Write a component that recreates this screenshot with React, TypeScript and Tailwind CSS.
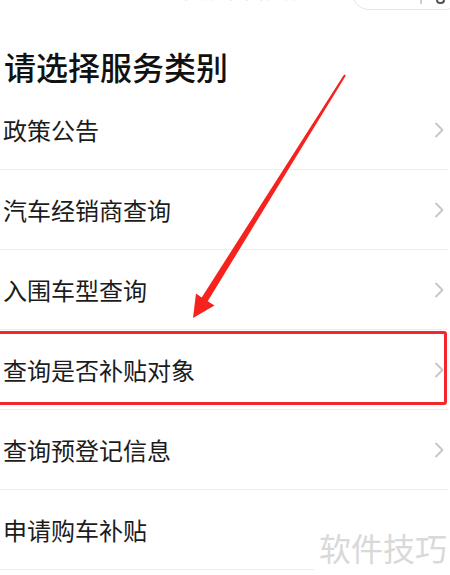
import React from "react";

const items = [
  { label: "政策公告", chevron: true },
  { label: "汽车经销商查询", chevron: true },
  { label: "入围车型查询", chevron: true },
  { label: "查询是否补贴对象", chevron: true, boxed: true },
  { label: "查询预登记信息", chevron: true },
  { label: "申请购车补贴", chevron: false },
];

function Chevron() {
  return (
    <svg width="10" height="16" viewBox="0 0 10 16" className="shrink-0">
      <polyline points="2,1.5 8.5,8 2,14.5" fill="none" stroke="#c6c6c6" strokeWidth="1.8" strokeLinecap="round" strokeLinejoin="round" />
    </svg>
  );
}

export default function App() {
  return (
    <div
      className="relative w-[450px] h-[575px] overflow-hidden bg-white"
      style={{ fontFamily: '"Noto Sans CJK SC", "Noto Sans", sans-serif' }}
    >
      {/* top bar remnants */}
      <div className="relative h-[12px] overflow-hidden">
        <div className="absolute left-[176px] top-[-21px] text-[20px] leading-[24px] text-[#e4e4e4]">
          申请购车补贴
        </div>
        <div className="absolute right-[-12px] top-[-24px] w-[110px] h-[34px] rounded-full border border-[#e6e6e6] bg-white flex items-end justify-end gap-[14px] pr-[16px] pb-[5px]">
          <span className="block w-[2px] h-[5px] bg-[#cfcfcf]" />
          <span className="block w-[9px] h-[4px] rounded-b-full border-2 border-t-0 border-[#555]" />
        </div>
      </div>

      {/* title */}
      <div className="mt-[34px] mb-[4px] h-[40px] flex items-center pl-[4px] text-[32px] leading-[40px] font-medium text-[#111]">
        请选择服务类别
      </div>

      {/* list */}
      <div className="flex flex-col">
        {items.map((it) => (
          <div
            key={it.label}
            className="relative h-[80px] flex items-center justify-between pl-[3px] pr-[4px] border-b border-[#ededed] mr-[2px]"
          >
            <span className="text-[24px] leading-[32px] text-[#1c1c1c]">{it.label}</span>
            {it.chevron && <Chevron />}
            {it.boxed && (
              <div className="absolute left-[-6px] right-[1px] top-[1px] bottom-[4px] border-[3px] border-[#f5262a] rounded-[3px]" />
            )}
          </div>
        ))}
      </div>

      {/* watermark */}
      <div className="absolute right-0 top-[518px] w-[136px] h-[57px] bg-white flex items-center justify-end pr-[3px] text-[32px] leading-[40px] text-[#d9d9d9]">
        软件技巧
      </div>

      {/* red arrow */}
      <svg className="absolute left-0 top-0 pointer-events-none" width="450" height="575" viewBox="0 0 450 575">
        <polygon
          points="345.9,75.5 207.7,301.2 214.5,305.5 193,318 196,293.5 201.7,297.4 344.1,74.5"
          fill="#f5221e"
        />
      </svg>
    </div>
  );
}
